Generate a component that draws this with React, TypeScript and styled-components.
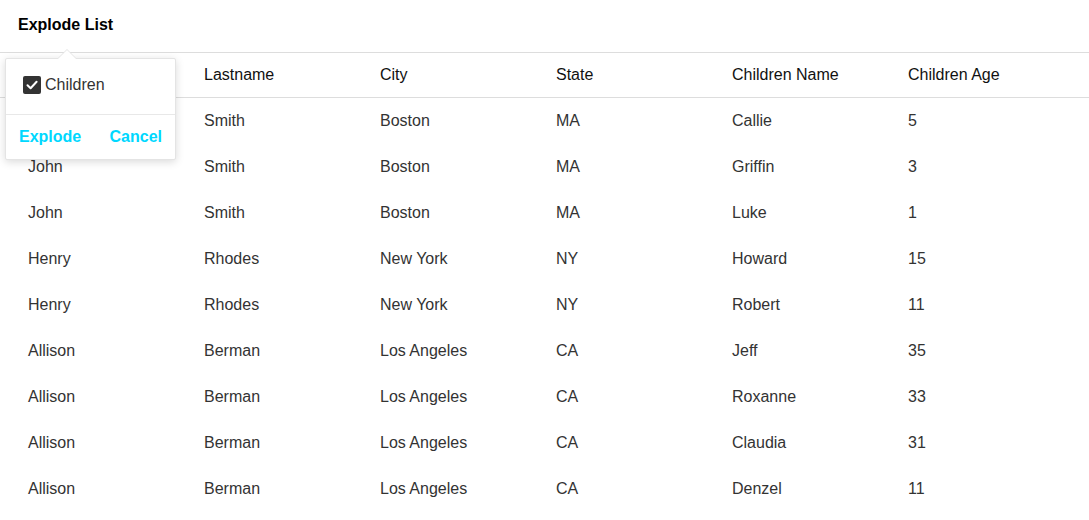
import React from "react";
import styled, { createGlobalStyle } from "styled-components";

const GlobalStyle = createGlobalStyle`
  html, body { margin: 0; padding: 0; background: #fff; }
  body { font-family: "Liberation Sans", Arial, sans-serif; color: #333; }
`;

const Page = styled.div`
  position: relative;
  width: 1089px;
`;

const TitleBar = styled.div`
  height: 53px;
  display: flex;
  align-items: center;
  padding-left: 18px;
  border-bottom: 1px solid #ddd;
  font-weight: bold;
  font-size: 16px;
  color: #000;
  box-sizing: border-box;
  padding-bottom: 2px;
`;

const Row = styled.div<{ $header?: boolean }>`
  display: grid;
  grid-template-columns: repeat(6, 176px);
  padding-left: 28px;
  height: ${(p) => (p.$header ? "44px" : "46px")};
  align-items: center;
  font-size: 16px;
  color: ${(p) => (p.$header ? "#111" : "#333")};
  border-bottom: ${(p) => (p.$header ? "1px solid #ddd" : "none")};
`;

const Cell = styled.div`
  white-space: nowrap;
`;

const Popover = styled.div`
  position: absolute;
  left: 5px;
  top: 58px;
  width: 171px;
  height: 102px;
  background: #fff;
  border: 1px solid #e4e4e4;
  box-shadow: 0 2px 8px rgba(0, 0, 0, 0.15);
  border-radius: 2px;
  box-sizing: border-box;
  display: flex;
  flex-direction: column;
  &::before {
    content: "";
    position: absolute;
    left: 51px;
    top: -10px;
    width: 0;
    height: 0;
    border-left: 10px solid transparent;
    border-right: 10px solid transparent;
    border-bottom: 10px solid #e4e4e4;
  }
  &::after {
    content: "";
    position: absolute;
    left: 52px;
    top: -9px;
    width: 0;
    height: 0;
    border-left: 9px solid transparent;
    border-right: 9px solid transparent;
    border-bottom: 9px solid #fff;
  }
`;

const CheckRow = styled.label`
  height: 56px;
  display: flex;
  align-items: center;
  padding-left: 17px;
  gap: 4px;
  font-size: 16px;
  color: #333;
  border-bottom: 1px solid #e8e8e8;
  box-sizing: border-box;
  padding-bottom: 4px;
`;

const Box = styled.span`
  width: 18px;
  height: 18px;
  border-radius: 2px;
  background: #333;
  display: inline-flex;
  align-items: center;
  justify-content: center;
`;

const Actions = styled.div`
  flex: 1;
  display: flex;
  align-items: center;
  justify-content: space-between;
  padding: 0 13px 0 13px;
`;

const ActionButton = styled.button`
  background: none;
  border: none;
  padding: 0;
  font-family: "Liberation Sans", Arial, sans-serif;
  font-weight: bold;
  font-size: 16px;
  color: #00d8ff;
  cursor: pointer;
`;

const headers = ["Firstname", "Lastname", "City", "State", "Children Name", "Children Age"];
const rows = [
  ["John", "Smith", "Boston", "MA", "Callie", "5"],
  ["John", "Smith", "Boston", "MA", "Griffin", "3"],
  ["John", "Smith", "Boston", "MA", "Luke", "1"],
  ["Henry", "Rhodes", "New York", "NY", "Howard", "15"],
  ["Henry", "Rhodes", "New York", "NY", "Robert", "11"],
  ["Allison", "Berman", "Los Angeles", "CA", "Jeff", "35"],
  ["Allison", "Berman", "Los Angeles", "CA", "Roxanne", "33"],
  ["Allison", "Berman", "Los Angeles", "CA", "Claudia", "31"],
  ["Allison", "Berman", "Los Angeles", "CA", "Denzel", "11"],
];

export default function App() {
  return (
    <Page>
      <GlobalStyle />
      <TitleBar>Explode List</TitleBar>
      <Row $header>
        {headers.map((h) => (
          <Cell key={h}>{h}</Cell>
        ))}
      </Row>
      {rows.map((r, i) => (
        <Row key={i}>
          {r.map((c, j) => (
            <Cell key={j}>{c}</Cell>
          ))}
        </Row>
      ))}
      <Popover>
        <CheckRow>
          <Box>
            <svg width="14" height="14" viewBox="0 0 14 14">
              <path d="M2.5 7.2 L5.6 10.2 L11.6 3.8" fill="none" stroke="#fff" strokeWidth="2" strokeLinecap="round" strokeLinejoin="round" />
            </svg>
          </Box>
          Children
        </CheckRow>
        <Actions>
          <ActionButton>Explode</ActionButton>
          <ActionButton>Cancel</ActionButton>
        </Actions>
      </Popover>
    </Page>
  );
}
